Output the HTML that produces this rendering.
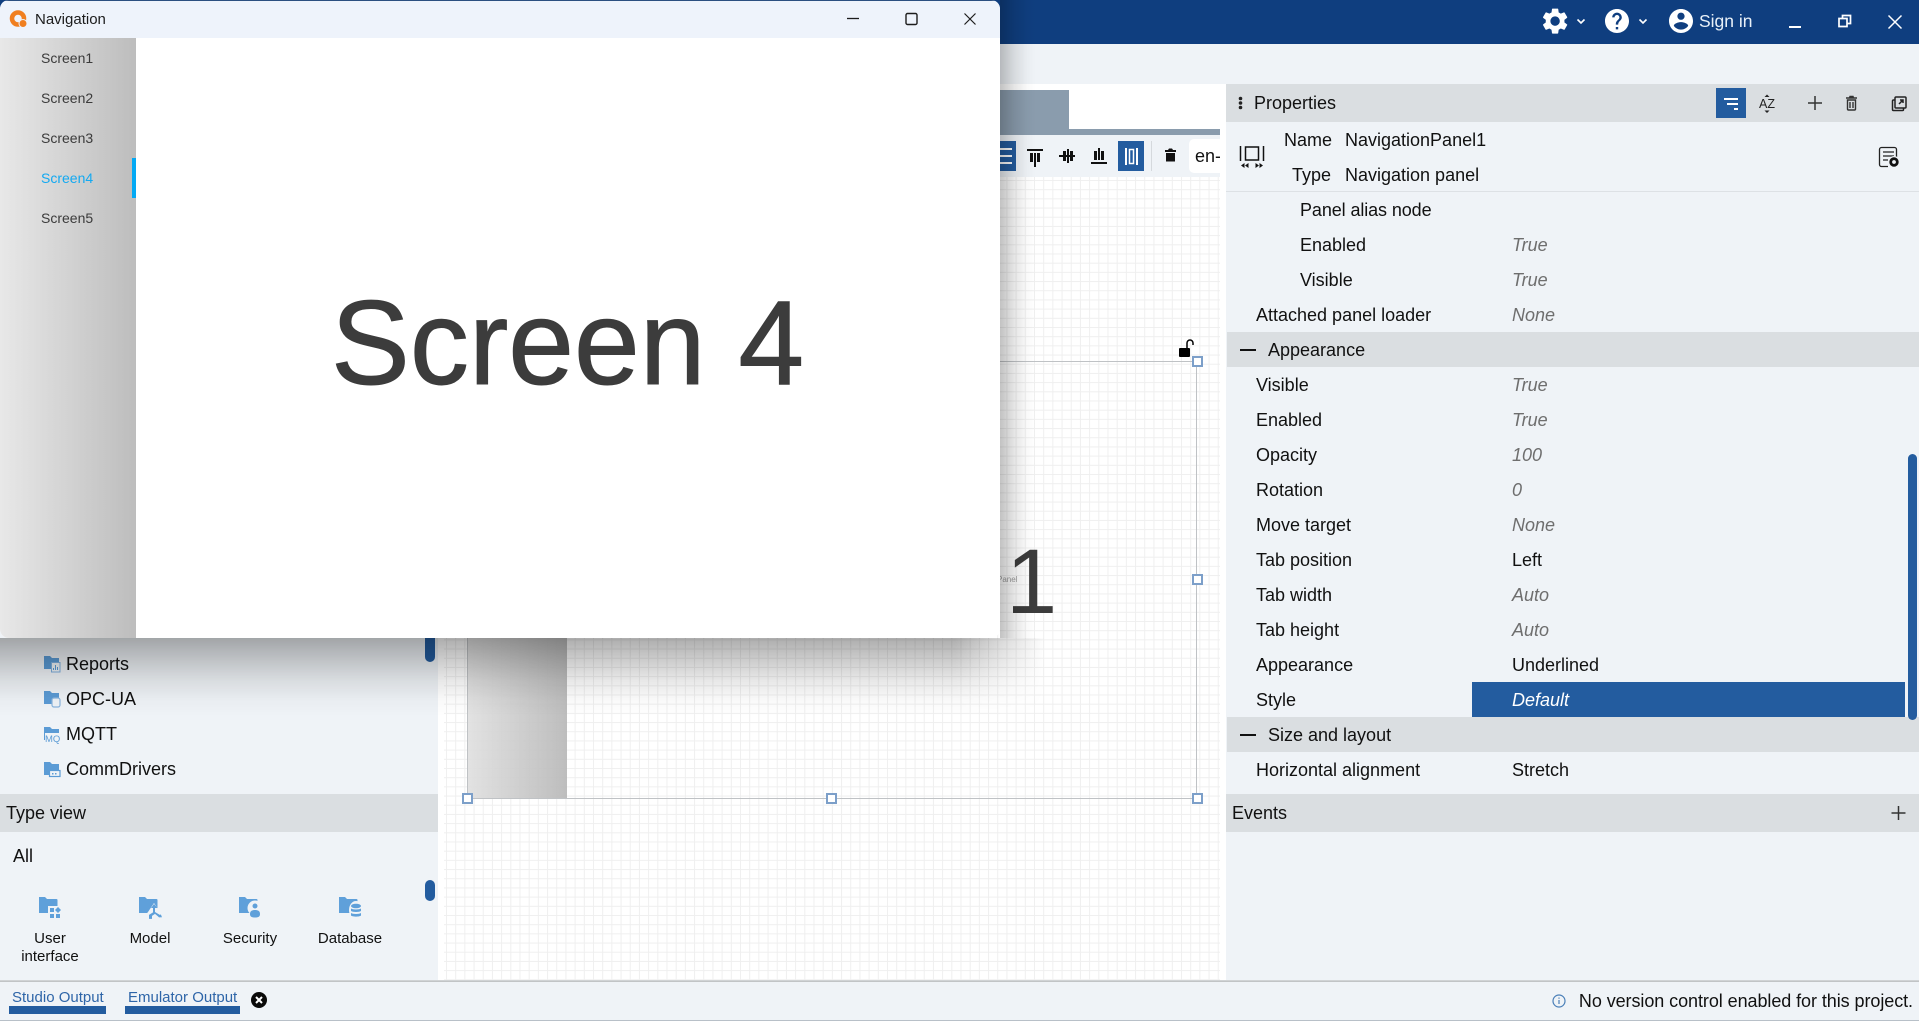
<!DOCTYPE html>
<html lang="en">
<head>
<meta charset="utf-8">
<title>Navigation</title>
<style>
html,body{margin:0;padding:0;width:1919px;height:1021px;overflow:hidden;background:#eff3f7;}
body{position:relative;font-family:"Liberation Sans",sans-serif;font-size:18px;color:#111;}
.a{position:absolute;}
.t{position:absolute;white-space:nowrap;}
.row{position:absolute;white-space:nowrap;height:35px;line-height:37px;}
.v{color:#6e6e6e;font-style:italic;left:1512px;}
.k{color:#111;left:1512px;}
.l{left:1256px;}
.s{left:1300px;}
.hdr{position:absolute;background:#dadee1;}
.grid{position:absolute;left:444px;top:177px;width:776px;height:805px;background-color:#fff;
background-image:linear-gradient(to right,#efefef 1px,transparent 1px),linear-gradient(to bottom,#efefef 1px,transparent 1px);
background-size:9.2px 9.2px;background-position:2px 3px;}
.h{position:absolute;width:7px;height:7px;border:2px solid #7c9fc9;background:#fff;}
.tv{position:absolute;width:100px;text-align:center;font-size:15px;line-height:18px;}
.scr{position:absolute;left:41px;font-size:14px;color:#3b3b3b;height:40px;line-height:39px;white-space:nowrap;}
svg{position:absolute;left:0;top:0;overflow:visible;}
</style>
</head>
<body>
<!-- top bar -->
<div class="a" style="left:0;top:0;width:1919px;height:44px;background:#0f3e7f;"></div>
<div class="t" style="left:1699px;top:0;height:44px;line-height:42px;font-size:17.5px;color:#e8f0f8;">Sign in</div>
<!-- centre white -->
<div class="a" style="left:438px;top:84px;width:788px;height:898px;background:#fff;"></div>
<!-- tab strip -->
<div class="a" style="left:438px;top:90px;width:631px;height:40px;background:#8a9cad;"></div>
<div class="a" style="left:438px;top:129px;width:782px;height:6px;background:#8a9cad;"></div>
<div class="a" style="left:438px;top:135px;width:782px;height:42px;background:#eff3f7;"></div>
<div class="a" style="left:980px;top:141px;width:36px;height:30px;background:#235c9f;"></div>
<div class="a" style="left:1118px;top:141px;width:26px;height:30px;background:#235c9f;"></div>
<div class="a" style="left:1151px;top:141px;width:1px;height:30px;background:#d5d9dd;"></div>
<div class="a" style="left:1189px;top:139px;width:31px;height:34px;background:#fff;border-radius:5px 0 0 5px;"></div>
<div class="t" style="left:1195px;top:139px;line-height:34px;overflow:hidden;width:25px;">en-US</div>

<!-- canvas -->
<div class="grid"></div>
<div class="a" style="left:467px;top:361px;width:100px;height:438px;background:linear-gradient(to right,#e0e0e0,#b8b8b8);opacity:.92;"></div>
<div class="a" style="left:467px;top:361px;width:730px;height:438px;border:1px solid #bfc2c5;box-sizing:border-box;"></div>
<div class="t" style="left:997px;top:575px;font-size:8px;color:#9a9a9a;line-height:10px;">Panel</div>
<div class="t" style="left:1006px;top:532px;font-size:92px;line-height:100px;color:#3c3c3c;">1</div>
<div class="h" style="left:1192px;top:356px;"></div>
<div class="h" style="left:1192px;top:574px;"></div>
<div class="h" style="left:1192px;top:793px;"></div>
<div class="h" style="left:826px;top:793px;"></div>
<div class="h" style="left:462px;top:793px;"></div>

<!-- left panel -->
<div class="t" style="left:66px;top:647px;line-height:35px;">Reports</div>
<div class="t" style="left:66px;top:682px;line-height:35px;">OPC-UA</div>
<div class="t" style="left:66px;top:717px;line-height:35px;">MQTT</div>
<div class="t" style="left:66px;top:752px;line-height:35px;">CommDrivers</div>
<div class="a" style="left:425px;top:620px;width:10px;height:42px;background:#235c9f;border-radius:5px;"></div>
<div class="hdr" style="left:0;top:794px;width:438px;height:38px;"></div>
<div class="t" style="left:6px;top:794px;line-height:38px;">Type view</div>
<div class="t" style="left:13px;top:839px;line-height:35px;">All</div>
<div class="a" style="left:425px;top:880px;width:10px;height:21px;background:#235c9f;border-radius:5px;"></div>
<div class="tv" style="left:0;top:930px;">User<br>interface</div>
<div class="tv" style="left:100px;top:930px;">Model</div>
<div class="tv" style="left:200px;top:930px;">Security</div>
<div class="tv" style="left:300px;top:930px;">Database</div>

<!-- properties panel -->
<div class="hdr" style="left:1226px;top:84px;width:693px;height:38px;"></div>
<div class="t" style="left:1254px;top:84px;line-height:38px;">Properties</div>
<div class="a" style="left:1716px;top:88px;width:30px;height:30px;background:#235c9f;"></div>
<div class="t" style="left:1284px;top:122px;width:47px;text-align:right;line-height:36px;">Name</div>
<div class="t" style="left:1345px;top:122px;line-height:36px;">NavigationPanel1</div>
<div class="t" style="left:1284px;top:157px;width:47px;text-align:right;line-height:36px;">Type</div>
<div class="t" style="left:1345px;top:157px;line-height:36px;">Navigation panel</div>
<div class="a" style="left:1226px;top:191px;width:693px;height:1px;background:#dde1e5;"></div>

<div class="row s" style="top:192px;letter-spacing:-.1px;">Panel alias node</div>
<div class="row s" style="top:227px;">Enabled</div><div class="row v" style="top:227px;">True</div>
<div class="row s" style="top:262px;">Visible</div><div class="row v" style="top:262px;">True</div>
<div class="row l" style="top:297px;">Attached panel loader</div><div class="row v" style="top:297px;">None</div>
<div class="hdr" style="left:1227px;top:332px;width:692px;height:35px;"></div>
<div class="a" style="left:1240px;top:349px;width:16px;height:2px;background:#111;"></div>
<div class="row" style="left:1268px;top:332px;">Appearance</div>
<div class="row l" style="top:367px;">Visible</div><div class="row v" style="top:367px;">True</div>
<div class="row l" style="top:402px;">Enabled</div><div class="row v" style="top:402px;">True</div>
<div class="row l" style="top:437px;">Opacity</div><div class="row v" style="top:437px;">100</div>
<div class="row l" style="top:472px;">Rotation</div><div class="row v" style="top:472px;">0</div>
<div class="row l" style="top:507px;">Move target</div><div class="row v" style="top:507px;">None</div>
<div class="row l" style="top:542px;">Tab position</div><div class="row k" style="top:542px;">Left</div>
<div class="row l" style="top:577px;">Tab width</div><div class="row v" style="top:577px;">Auto</div>
<div class="row l" style="top:612px;">Tab height</div><div class="row v" style="top:612px;">Auto</div>
<div class="row l" style="top:647px;">Appearance</div><div class="row k" style="top:647px;">Underlined</div>
<div class="a" style="left:1472px;top:682px;width:433px;height:35px;background:#235c9f;"></div>
<div class="row l" style="top:682px;">Style</div><div class="row v" style="top:682px;color:#fff;">Default</div>
<div class="hdr" style="left:1227px;top:717px;width:692px;height:35px;"></div>
<div class="a" style="left:1240px;top:734px;width:16px;height:2px;background:#111;"></div>
<div class="row" style="left:1268px;top:717px;">Size and layout</div>
<div class="row l" style="top:752px;">Horizontal alignment</div><div class="row k" style="top:752px;">Stretch</div>
<div class="a" style="left:1908px;top:454px;width:9px;height:266px;background:#235c9f;border-radius:5px;"></div>
<div class="hdr" style="left:1226px;top:794px;width:693px;height:38px;"></div>
<div class="t" style="left:1232px;top:794px;line-height:38px;">Events</div>

<!-- status bar -->
<div class="a" style="left:0;top:980px;width:1919px;height:2px;background:linear-gradient(#d8dadc,#b9bcbf);"></div>
<div class="a" style="left:0;top:982px;width:1919px;height:38px;background:#eff3f7;"></div>
<div class="a" style="left:0;top:1020px;width:1919px;height:1px;background:#b8c0c8;"></div>
<div class="t" style="left:12px;top:988px;font-size:15px;line-height:20px;color:#2e65a8;">Studio Output</div>
<div class="a" style="left:9px;top:1006px;width:97px;height:8px;background:#235c9f;"></div>
<div class="t" style="left:128px;top:988px;font-size:15px;line-height:20px;color:#2e65a8;">Emulator Output</div>
<div class="a" style="left:125px;top:1006px;width:115px;height:8px;background:#235c9f;"></div>
<div class="t" style="right:6px;top:982px;line-height:38px;letter-spacing:-.07px;">No version control enabled for this project.</div>

<!-- icons -->
<svg width="1919" height="1021" viewBox="0 0 1919 1021">
  <!-- top right -->
  <g fill="#fff">
    <path transform="translate(1539.5,5.5) scale(1.3)" d="M19.14 12.94c.04-.3.06-.61.06-.94 0-.32-.02-.64-.07-.94l2.03-1.58c.18-.14.23-.41.12-.61l-1.92-3.32c-.12-.22-.37-.29-.59-.22l-2.39.96c-.5-.38-1.03-.7-1.62-.94l-.36-2.54c-.04-.24-.24-.41-.48-.41h-3.84c-.24 0-.43.17-.47.41l-.36 2.54c-.59.24-1.13.57-1.62.94l-2.39-.96c-.22-.08-.47 0-.59.22L2.74 8.87c-.12.21-.08.47.12.61l2.03 1.58c-.05.3-.09.63-.09.94s.02.64.07.94l-2.03 1.58c-.18.14-.23.41-.12.61l1.92 3.32c.12.22.37.29.59.22l2.39-.96c.5.38 1.03.7 1.62.94l.36 2.54c.05.24.24.41.48.41h3.84c.24 0 .44-.17.47-.41l.36-2.54c.59-.24 1.13-.56 1.62-.94l2.39.96c.22.08.47 0 .59-.22l1.92-3.32c.12-.22.07-.47-.12-.61l-2.01-1.58zM12 15.6c-1.98 0-3.6-1.62-3.6-3.6s1.62-3.6 3.6-3.6 3.6 1.62 3.6 3.6-1.62 3.6-3.6 3.6z"/>
    <path transform="translate(1602.6,6.6) scale(1.2)" d="M12 2C6.48 2 2 6.48 2 12s4.48 10 10 10 10-4.48 10-10S17.52 2 12 2zm1 17h-2v-2h2v2zm2.07-7.75l-.9.92C13.45 12.9 13 13.5 13 15h-2v-.5c0-1.1.45-2.1 1.17-2.83l1.24-1.26c.37-.36.59-.86.59-1.41 0-1.1-.9-2-2-2s-2 .9-2 2H8c0-2.21 1.79-4 4-4s4 1.79 4 4c0 .88-.36 1.68-.93 2.25z"/>
    <path transform="translate(1666.6,6.6) scale(1.2)" d="M12 2C6.48 2 2 6.48 2 12s4.48 10 10 10 10-4.48 10-10S17.52 2 12 2zm0 3c1.66 0 3 1.34 3 3s-1.34 3-3 3-3-1.34-3-3 1.34-3 3-3zm0 14.2c-2.5 0-4.71-1.28-6-3.22.03-1.99 4-3.08 6-3.08 1.99 0 5.97 1.09 6 3.08-1.29 1.94-3.5 3.22-6 3.22z"/>
    <rect x="1789" y="26" width="12" height="2"/>
  </g>
  <g fill="none" stroke="#fff">
    <path d="M1577.5 19.5l3.5 3.5 3.5-3.5M1639.5 19.5l3.5 3.5 3.5-3.5" stroke-width="1.6"/>
    <path d="M1842.5 18.5V15.5h8v8h-3M1839 18.5h8v8h-8z" stroke-width="1.7"/>
    <path d="M1888.5 15.5l13 13M1901.5 15.5l-13 13" stroke-width="1.5"/>
  </g>
  <!-- canvas toolbar -->
  <g fill="#fff"><rect x="1000" y="148" width="12" height="2"/><rect x="1000" y="155" width="12" height="2"/><rect x="1000" y="162" width="12" height="2"/></g>
  <g fill="#111">
    <rect x="1027" y="149" width="16" height="2"/><rect x="1030" y="153" width="3" height="9"/><rect x="1034" y="153" width="2" height="14"/><rect x="1037" y="153" width="3" height="9"/>
    <rect x="1059" y="155" width="16" height="2"/><rect x="1063" y="151" width="3" height="10"/><rect x="1067" y="149" width="2" height="14"/><rect x="1070" y="151" width="3" height="10"/>
    <rect x="1091" y="162" width="16" height="2"/><rect x="1094" y="151" width="3" height="9"/><rect x="1098" y="148" width="2" height="12"/><rect x="1101" y="151" width="3" height="9"/>
    <path d="M1165 150h3l1-1.500h3l1 1.500h3v2h-11zM1166 153h9v8.500h-9z"/>
  </g>
  <g fill="#fff"><rect x="1125" y="148" width="2" height="17"/><rect x="1136" y="148" width="2" height="17"/><rect x="1129.500" y="149.500" width="4" height="14" fill="none" stroke="#fff" stroke-width="1.500"/></g>
  <!-- lock -->
  <rect x="1179" y="348" width="11" height="9" rx="1" fill="#000"/>
  <path d="M1187 348v-5a3 3 0 0 1 6 0v2" fill="none" stroke="#000" stroke-width="1.500"/>
  <!-- props header -->
  <g fill="#222"><circle cx="1240.500" cy="98.500" r="1.800"/><circle cx="1240.500" cy="103" r="1.800"/><circle cx="1240.500" cy="107.500" r="1.800"/></g>
  <g fill="#fff"><rect x="1724" y="98" width="14" height="2"/><rect x="1727" y="103" width="11" height="2"/><rect x="1734" y="108" width="4" height="2"/></g>
  <text x="1759" y="108" font-family="Liberation Sans, sans-serif" font-size="12.500" fill="#222">AZ</text>
  <path d="M1767 94.500l-2.500 2.500h5zM1767 113l-2.500-2.500h5z" fill="#222"/>
  <path d="M1815 96v14M1808 103h14" stroke="#333" stroke-width="1.500" fill="none"/>
  <path d="M1846 98h11M1849.500 98l.5-1.500h3l.5 1.500M1847.500 100h8v9a1 1 0 0 1-1 1h-6a1 1 0 0 1-1-1zM1850 102v6M1853 102v6" stroke="#333" stroke-width="1.400" fill="none"/>
  <path d="M1896 97h9a1 1 0 0 1 1 1v9a1 1 0 0 1-1 1h-9a1 1 0 0 1-1-1v-9a1 1 0 0 1 1-1zM1895 100h-1.500a1 1 0 0 0-1 1v8.500a1 1 0 0 0 1 1h9a1 1 0 0 0 1-1V108M1899 104l4-4M1900 100h3v3" stroke="#222" stroke-width="1.500" fill="none"/>
  <!-- panel icon -->
  <path d="M1240.500 146v15M1263.500 146v15" stroke="#111" stroke-width="1.500"/>
  <rect x="1245.500" y="147" width="13" height="13" fill="none" stroke="#111" stroke-width="1.500"/>
  <path d="M1241 165.500l3.500-2.500v5zM1245 165.500l3.500-2.500v5zM1263 165.500l-3.500-2.500v5zM1259 165.500l-3.500-2.500v5z" fill="#111"/>
  <!-- doc gear -->
  <path d="M1888 166.500h-6.500a2 2 0 0 1-2-2v-15a2 2 0 0 1 2-2h13a2 2 0 0 1 2 2v8" fill="none" stroke="#222" stroke-width="1.300"/>
  <path d="M1883 152h11M1883 156h11M1883 160h5" stroke="#222" stroke-width="1.300"/>
  <circle cx="1894" cy="162" r="6" fill="#eff3f7"/>
  <circle cx="1894" cy="162" r="3.300" fill="#eff3f7" stroke="#111" stroke-width="2.800"/>
  <!-- events plus -->
  <path d="M1898.500 806v14M1891.500 813h14" stroke="#333" stroke-width="1.500"/>
  <!-- info + close -->
  <circle cx="1559" cy="1001" r="6" fill="none" stroke="#4a7fb8" stroke-width="1.200"/>
  <path d="M1559 1000v4M1559 997.500v1.200" stroke="#4a7fb8" stroke-width="1.200"/>
  <circle cx="259" cy="1000" r="8" fill="#0a0a0a"/>
  <path d="M256 997l6 6M262 997l-6 6" stroke="#fff" stroke-width="2"/>
  <!-- tree icons -->
  <g fill="#5b9bd5">
    <path d="M44 656h6l2 2h7v11H44z"/><rect x="51.500" y="662.500" width="8.500" height="9.500" fill="#eff3f7" stroke="#7fb0df" stroke-width="1"/><path d="M53 670h1v-2h-1zM55 670h1v-5h-1zM57 670h1v-3h-1z"/>
    <path d="M44 691h6l2 2h7v11H44z"/><rect x="52" y="698" width="8" height="9" rx="2" fill="#eff3f7" stroke="#8ab5de" stroke-width="1.200"/>
    <path d="M44 727h6l2 2h7v11H44z"/><rect x="45" y="733" width="15" height="9.500" fill="#eff3f7"/><text x="45" y="742" font-family="Liberation Sans, sans-serif" font-size="9.500" fill="#5b9bd5">MQ</text>
    <path d="M44 762h6l2 2h7v11H44z"/><rect x="49.500" y="770.500" width="10.500" height="6" fill="#eff3f7" stroke="#5b9bd5" stroke-width="1.200"/><path d="M52 773h1.500v1.500H52zM55 773h1.500v1.500H55z"/>
  </g>
  <!-- type view icons -->
  <g fill="#5fa0da">
    <path d="M39 897h6l2 2h9.500a1 1 0 0 1 1 1v12a1 1 0 0 1-1 1H39z"/>
    <rect x="48" y="906" width="13" height="13" fill="#eff3f7"/>
    <rect x="50" y="908" width="4" height="4"/><rect x="50" y="914" width="4" height="4"/><rect x="56" y="914" width="4" height="4"/><path d="M58 907l3 3-3 3-3-3z"/>
    <path d="M139 897h6l2 2h9.500a1 1 0 0 1 1 1v12a1 1 0 0 1-1 1H139z"/>
    <path d="M148 912l6-9 6 9 2 7h-20z" fill="#eff3f7"/>
    <path d="M154 904l3.500 4h-2.500v4l5 3 .8-.8 1.200 3-3 .2-1-1-3-2.500-3 2v3h-3v-4l4-2.500V908h-2z"/>
    <path d="M239 897h6l2 2h9.500a1 1 0 0 1 1 1v12a1 1 0 0 1-1 1H239z"/>
    <circle cx="255" cy="908" r="7.500" fill="#eff3f7"/><circle cx="255" cy="906" r="2.500"/><path d="M250 914c0-3 2-4 5-4s5 1 5 4-2 3.500-5 3.500-5-.5-5-3.500z"/>
    <path d="M339 897h6l2 2h9.500a1 1 0 0 1 1 1v12a1 1 0 0 1-1 1H339z"/>
    <ellipse cx="356" cy="910" rx="7" ry="9" fill="#eff3f7"/>
    <ellipse cx="356" cy="906" rx="5" ry="2.300"/><path d="M351 908.500c1.500 1.300 8.500 1.300 10 0v2.500c-1.500 1.300-8.500 1.300-10 0zM351 913c1.500 1.300 8.500 1.300 10 0v2.500c-1.500 1.500-8.500 1.500-10 0z"/>
  </g>
</svg>

<!-- window shadow drawn explicitly -->
<div class="a" style="left:0;top:638px;width:1045px;height:78px;background:linear-gradient(to bottom,rgba(0,0,0,.32),rgba(0,0,0,.21) 25%,rgba(0,0,0,.09) 55%,rgba(0,0,0,.025) 80%,rgba(0,0,0,0));-webkit-mask-image:linear-gradient(to right,#000 955px,transparent 1045px);mask-image:linear-gradient(to right,#000 955px,transparent 1045px);"></div>
<div class="a" style="left:1000px;top:0;width:36px;height:638px;background:linear-gradient(to right,rgba(0,0,0,.24),rgba(0,0,0,.1) 40%,rgba(0,0,0,.025) 75%,rgba(0,0,0,0));"></div>

<!-- emulator window -->
<div class="a" style="left:0;top:0;width:1000px;height:638px;background:#fff;border-radius:9px;overflow:hidden;">
  <div class="a" style="left:0;top:0;width:1000px;height:38px;background:#eef3fb;"></div>
  <div class="a" style="left:0;top:0;width:1000px;height:1px;background:#2b4f80;"></div>
  <div class="t" style="left:35px;top:0;font-size:15px;line-height:40px;color:#1c1c1c;">Navigation</div>
  <svg width="1000" height="638" viewBox="0 0 1000 638">
    <circle cx="18" cy="18.500" r="6" fill="none" stroke="#f07f20" stroke-width="4.500"/>
    <circle cx="23" cy="23.500" r="4" fill="#f07f20" stroke="#eef3fb" stroke-width="1"/>
    <path d="M847 18.500h12" stroke="#1c1c1c" stroke-width="1.300"/>
    <rect x="906" y="13.500" width="11" height="11" rx="1.500" fill="none" stroke="#1c1c1c" stroke-width="1.400"/>
    <path d="M964.500 13.500l11 11M975.500 13.500l-11 11" stroke="#1c1c1c" stroke-width="1.200"/>
  </svg>
  <div class="a" style="left:0;top:38px;width:136px;height:600px;background:linear-gradient(to right,#e8e8e8,#bdbdbd);"></div>
  <div class="scr" style="top:39px;">Screen1</div>
  <div class="scr" style="top:79px;">Screen2</div>
  <div class="scr" style="top:119px;">Screen3</div>
  <div class="scr" style="top:159px;color:#13a9f1;">Screen4</div>
  <div class="scr" style="top:199px;">Screen5</div>
  <div class="a" style="left:132px;top:158px;width:4px;height:40px;background:#03a9f4;"></div>
  <div class="t" style="left:331px;top:268px;font-size:120px;line-height:150px;color:#3c3c3c;-webkit-text-stroke:1px #3c3c3c;transform:scaleX(.985);transform-origin:0 0;">Screen 4</div>
</div>
</body>
</html>
